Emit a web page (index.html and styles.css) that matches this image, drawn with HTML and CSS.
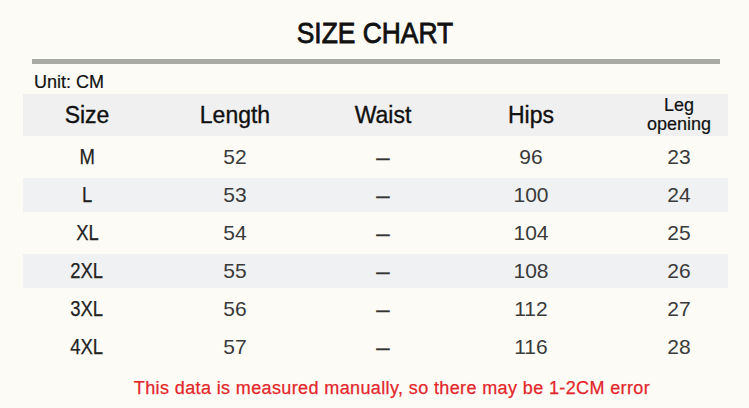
FILE: index.html
```html
<!DOCTYPE html>
<html lang="en">
<head>
<meta charset="utf-8">
<title>Size Chart</title>
<link rel="stylesheet" href="styles.css">
</head>
<body>
<div class="page">
  <h1 class="title"><span class="narrow-title">SIZE CHART</span></h1>
  <div class="rule"></div>
  <div class="unit">Unit: CM</div>
  <div class="table">
    <div class="row head">
      <div class="cell">Size</div>
      <div class="cell">Length</div>
      <div class="cell">Waist</div>
      <div class="cell">Hips</div>
      <div class="cell last leg">Leg<br>opening</div>
    </div>
    <div class="row">
      <div class="cell size"><span class="narrow">M</span></div>
      <div class="cell num">52</div>
      <div class="cell num"><span class="dash">–</span></div>
      <div class="cell num">96</div>
      <div class="cell num last">23</div>
    </div>
    <div class="row stripe">
      <div class="cell size"><span class="narrow">L</span></div>
      <div class="cell num">53</div>
      <div class="cell num"><span class="dash">–</span></div>
      <div class="cell num">100</div>
      <div class="cell num last">24</div>
    </div>
    <div class="row">
      <div class="cell size"><span class="narrow">XL</span></div>
      <div class="cell num">54</div>
      <div class="cell num"><span class="dash">–</span></div>
      <div class="cell num">104</div>
      <div class="cell num last">25</div>
    </div>
    <div class="row stripe">
      <div class="cell size"><span class="narrow">2XL</span></div>
      <div class="cell num">55</div>
      <div class="cell num"><span class="dash">–</span></div>
      <div class="cell num">108</div>
      <div class="cell num last">26</div>
    </div>
    <div class="row">
      <div class="cell size"><span class="narrow">3XL</span></div>
      <div class="cell num">56</div>
      <div class="cell num"><span class="dash">–</span></div>
      <div class="cell num">112</div>
      <div class="cell num last">27</div>
    </div>
    <div class="row">
      <div class="cell size"><span class="narrow">4XL</span></div>
      <div class="cell num">57</div>
      <div class="cell num"><span class="dash">–</span></div>
      <div class="cell num">116</div>
      <div class="cell num last">28</div>
    </div>
  </div>
  <p class="note">This data is measured manually, so there may be 1-2CM error</p>
</div>
</body>
</html>
```

FILE: styles.css
```css
html, body {
  margin: 0;
  padding: 0;
}
body {
  background: #fcfbf6;
  font-family: "Liberation Sans", Arial, sans-serif;
  color: #111;
  width: 749px;
  height: 408px;
  overflow: hidden;
}
.page {
  padding-top: 19px;
}
.title {
  margin: 0;
  font-size: 29px;
  line-height: 29px;
  font-weight: normal;
  text-align: center;
  color: #111;
}
.narrow-title {
  display: inline-block;
  transform: scaleX(0.91);
  -webkit-text-stroke: 0.8px #111;
}
.rule {
  height: 5px;
  background: #a9a9a5;
  margin: 11px 29px 0 32px;
}
.unit {
  margin-top: 9px;
  padding-left: 34px;
  font-size: 18px;
  line-height: 18px;
  color: #111;
  -webkit-text-stroke: 0.2px #111;
}
.table {
  margin: 3px 0 0 23px;
  width: 705px;
  display: flex;
  flex-direction: column;
  gap: 4px;
}
.row {
  display: grid;
  grid-template-columns: 128px 168px 128px 168px 1fr;
  align-items: center;
  height: 34px;
}
.row.head {
  height: 42px;
  background: #f0f0f0;
  font-size: 23px;
  color: #111;
  -webkit-text-stroke: 0.35px #111;
}
.row.stripe {
  background: #f0f1f2;
}
.cell {
  text-align: center;
}
.cell.last {
  padding-left: 15px;
}
.leg {
  font-size: 18px;
  line-height: 19px;
  -webkit-text-stroke: 0.2px #111;
}
.num {
  font-size: 21px;
  color: #3a3a3a;
}
.dash {
  font-size: 24px;
  color: #333;
  -webkit-text-stroke: 0.3px #333;
}
.size {
  font-size: 22px;
  color: #222;
}
.narrow {
  display: inline-block;
  transform: scaleX(0.84);
  -webkit-text-stroke: 0.25px #222;
}
.note {
  margin: 15px 0 0;
  padding-left: 35px;
  text-align: center;
  font-size: 18px;
  line-height: 18px;
  letter-spacing: 0.38px;
  color: #e3262a;
  -webkit-text-stroke: 0.25px #e3262a;
}
```
